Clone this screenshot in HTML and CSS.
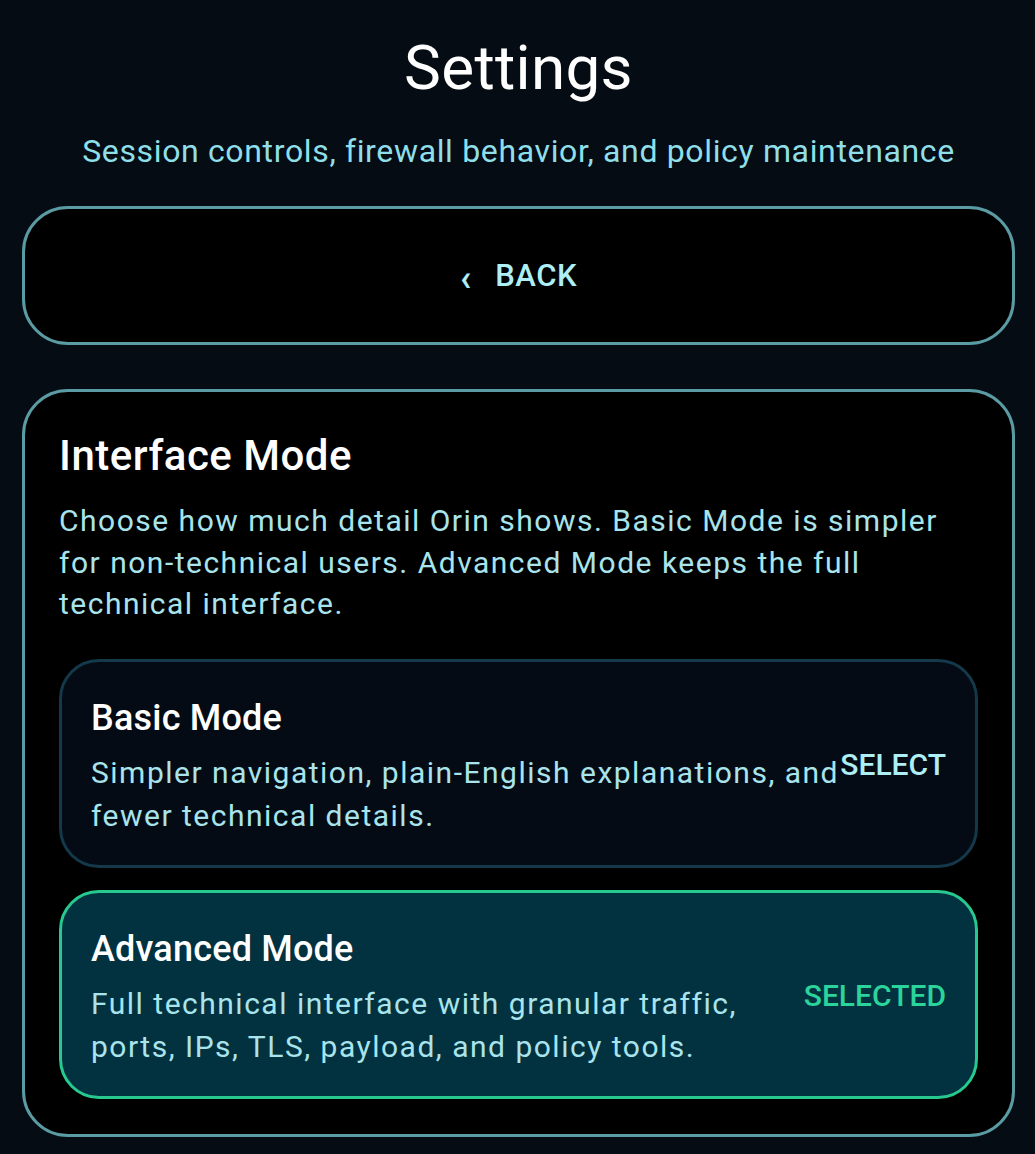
FILE: index.html
```html
<!DOCTYPE html>
<html lang="en">
<head>
<meta charset="utf-8">
<title>Settings</title>
<link rel="stylesheet" href="styles.css">
</head>
<body>
<main class="page">
  <header class="header">
    <h1 class="title">Settings</h1>
    <p class="subtitle">Session controls, firewall behavior, and policy maintenance</p>
  </header>

  <button class="back-btn" type="button">
    <span class="back-chev">‹</span>
    <span class="back-label">BACK</span>
  </button>

  <section class="card">
    <h2 class="card-title">Interface Mode</h2>
    <p class="card-text">Choose how much detail Orin shows. Basic Mode is simpler<br>for non-technical users. Advanced Mode keeps the full<br>technical interface.</p>

    <div class="option">
      <h3 class="option-title">Basic Mode</h3>
      <div class="option-row">
        <p class="option-desc">Simpler navigation, plain-English explanations, and<br>fewer technical details.</p>
        <span class="option-action">SELECT</span>
      </div>
    </div>

    <div class="option option--selected">
      <h3 class="option-title">Advanced Mode</h3>
      <div class="option-row">
        <p class="option-desc">Full technical interface with granular traffic,<br>ports, IPs, TLS, payload, and policy tools.</p>
        <span class="option-action option-action--selected">SELECTED</span>
      </div>
    </div>
  </section>
</main>
</body>
</html>
```

FILE: styles.css
```css
* { box-sizing: border-box; }

html, body {
  margin: 0;
  padding: 0;
  background: #050c14;
}

body {
  font-family: Roboto, "Noto Sans", "Liberation Sans", sans-serif;
  color: #ffffff;
}

.page {
  padding: 0 20px 0 22px;
}

.header {
  text-align: center;
  padding-top: 32px;
}

.title {
  margin: 0;
  font-size: 62px;
  font-weight: 400;
  line-height: 72px;
  letter-spacing: 0.3px;
  color: #ffffff;
}

.subtitle {
  margin: 27px 0 0;
  font-size: 32px;
  line-height: 40px;
  letter-spacing: 0.65px;
  color: #8fdfe8;
}

.back-btn {
  display: flex;
  align-items: center;
  justify-content: center;
  gap: 24px;
  width: 100%;
  height: 139px;
  margin-top: 35px;
  background: #000000;
  border: 3px solid #5b9ba3;
  border-radius: 46px;
  font-family: inherit;
  color: #aeeef5;
  padding: 0;
}

.back-chev {
  font-size: 36px;
  font-weight: 700;
  line-height: 1;
  margin-top: 4px;
}

.back-label {
  font-size: 31px;
  font-weight: 500;
  letter-spacing: 0.5px;
}

.card {
  margin-top: 44px;
  background: #000000;
  border: 3px solid #5b9ba3;
  border-radius: 46px;
  padding: 39px 34px 35px 34px;
}

.card-title {
  margin: 0;
  font-size: 42px;
  font-weight: 500;
  line-height: 50px;
  letter-spacing: 0.5px;
  color: #ffffff;
}

.card-text {
  margin: 19px 0 0;
  font-size: 30px;
  line-height: 41.5px;
  letter-spacing: 1.5px;
  color: #a9e4ec;
}

.option {
  margin-top: 34px;
  background: #050b14;
  border: 3px solid #13394a;
  border-radius: 40px;
  padding: 34px 29px 28px 29px;
}

.option + .option {
  margin-top: 22px;
}

.option--selected {
  background: #02313f;
  border-color: #27c98f;
}

.option-title {
  margin: 0;
  font-size: 36px;
  font-weight: 500;
  line-height: 44px;
  letter-spacing: 0.2px;
  color: #ffffff;
}

.option-row {
  display: flex;
  align-items: flex-start;
  margin-top: 11px;
}

.option-desc {
  flex: 1;
  margin: 0;
  font-size: 30px;
  line-height: 43px;
  letter-spacing: 1.5px;
  color: #a9e4ec;
}

.option-action {
  font-size: 30px;
  font-weight: 500;
  line-height: 28px;
  color: #aeeef5;
  white-space: nowrap;
}

.option-action--selected {
  color: #2bd49a;
}
```
